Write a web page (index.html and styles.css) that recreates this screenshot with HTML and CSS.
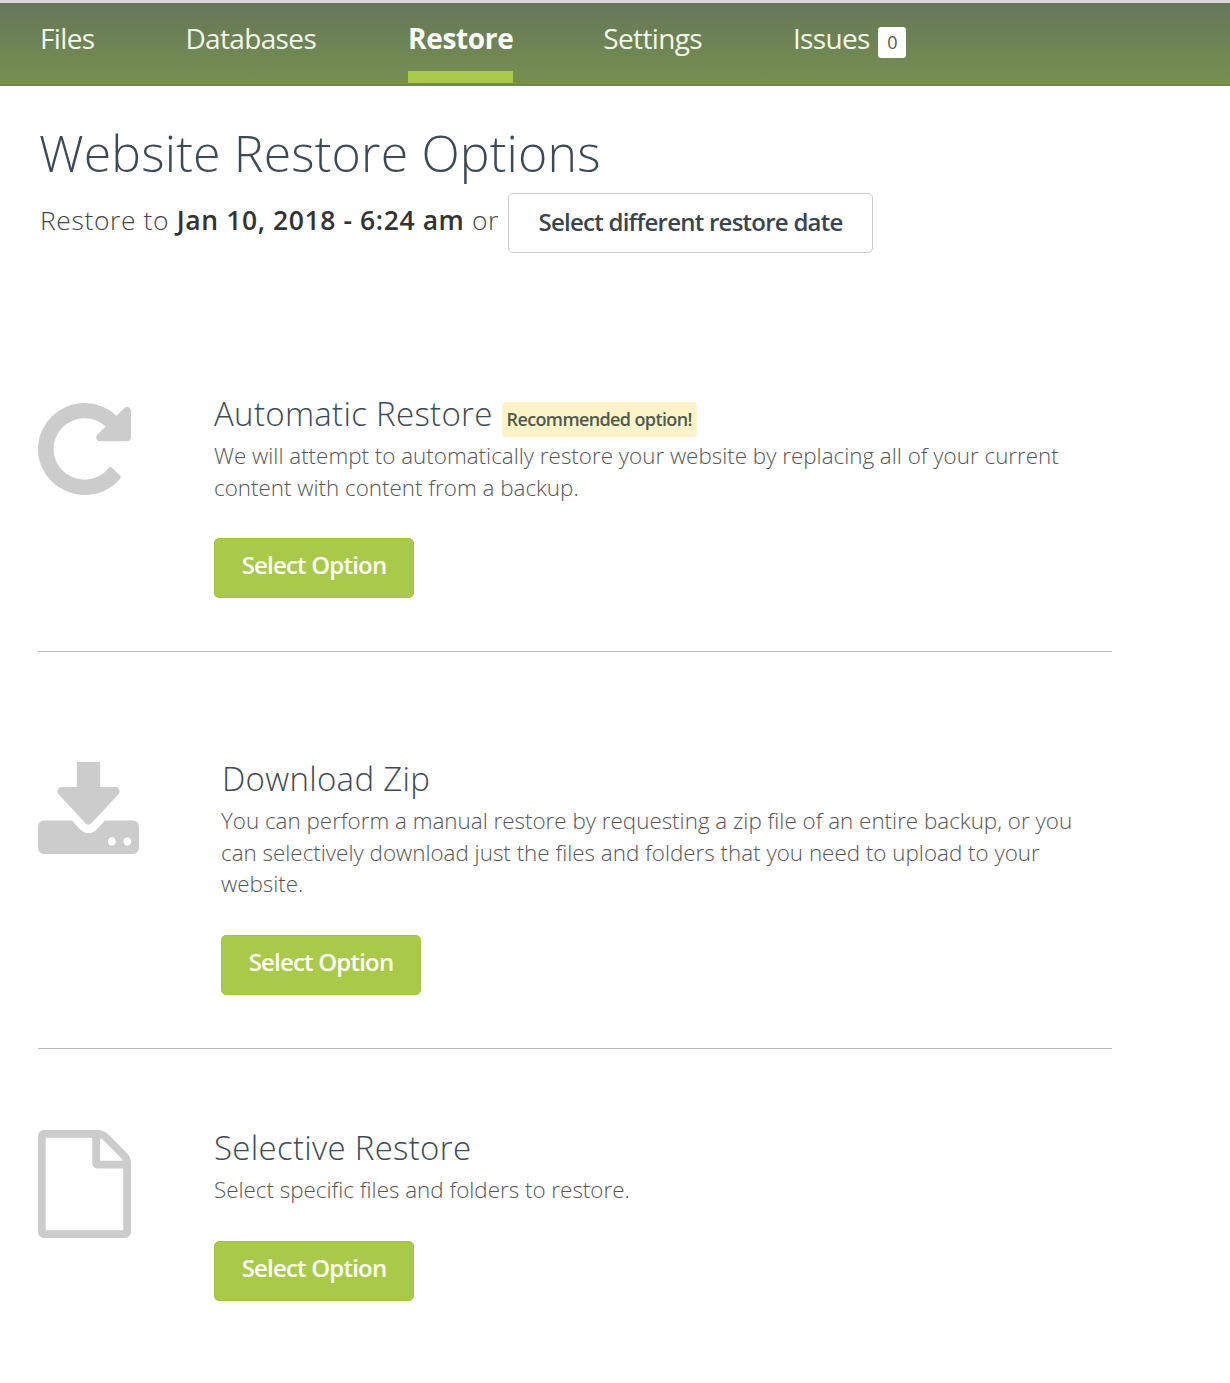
FILE: index.html
```html
<!DOCTYPE html>
<html lang="en">
<head>
<meta charset="utf-8">
<title>Website Restore Options</title>
<link rel="stylesheet" href="styles.css">
</head>
<body>
<nav class="nav">
  <a class="nav-item">Files</a>
  <a class="nav-item">Databases</a>
  <a class="nav-item active">Restore</a>
  <a class="nav-item">Settings</a>
  <a class="nav-item">Issues <span class="count">0</span></a>
</nav>
<main class="main">
  <h1 class="title">Website Restore Options</h1>
  <div class="subtitle">
    <span class="restore-to">Restore to <strong>Jan 10, 2018 - 6:24 am</strong> or</span>
    <button class="date-btn">Select different restore date</button>
  </div>

  <section class="option first">
    <svg class="icon icon-redo" viewBox="128 128 1536 1536" width="93" height="92" preserveAspectRatio="none">
      <path fill="#ccc" d="M1664 256v448q0 26-19 45t-45 19h-448q-42 0-59-40-17-39 14-69l138-138q-148-137-349-137-104 0-198.5 40.5t-163.5 109.5-109.5 163.5-40.5 198.5 40.5 198.5 109.5 163.5 163.5 109.5 198.5 40.5q119 0 225-52t179-147q7-10 23-12 15 0 25 9l137 138q9 8 9.5 20.5t-7.5 22.5q-109 132-264 204.5t-327 72.5q-156 0-298-61t-245-164-164-245-61-298 61-298 164-245 245-164 298-61q147 0 284.5 55.5t244.5 156.5l130-129q29-31 70-14 39 17 39 59z"/>
    </svg>
    <div class="body">
      <h2 class="opt-title">Automatic Restore <span class="tag">Recommended option!</span></h2>
      <p class="desc">We will attempt to automatically restore your website by replacing all of your current content with content from a backup.</p>
      <button class="select">Select Option</button>
    </div>
  </section>

  <section class="option second">
    <svg class="icon icon-dl" viewBox="64 128 1664 1408" width="101" height="92" preserveAspectRatio="none">
      <path fill="#ccc" d="M1344 1344q0-26-19-45t-45-19-45 19-19 45 19 45 45 19 45-19 19-45zm256 0q0-26-19-45t-45-19-45 19-19 45 19 45 45 19 45-19 19-45zm128-224v320q0 40-28 68t-68 28h-1472q-40 0-68-28t-28-68v-320q0-40 28-68t68-28h465l135 136q58 56 136 56t136-56l136-136h464q40 0 68 28t28 68zm-325-569q17 41-14 70l-448 448q-18 19-45 19t-45-19l-448-448q-31-29-14-70 17-39 59-39h256v-448q0-26 19-45t45-19h256q26 0 45 19t19 45v448h256q42 0 59 39z"/>
    </svg>
    <div class="body">
      <h2 class="opt-title">Download Zip</h2>
      <p class="desc">You can perform a manual restore by requesting a zip file of an entire backup, or you can selectively download just the files and folders that you need to upload to your website.</p>
      <button class="select">Select Option</button>
    </div>
  </section>

  <section class="option third">
    <svg class="icon icon-file" viewBox="128 0 1536 1792" width="93" height="108" preserveAspectRatio="none">
      <path fill="#ccc" d="M1596 380q28 28 48 76t20 88v1152q0 40-28 68t-68 28h-1344q-40 0-68-28t-28-68v-1600q0-40 28-68t68-28h896q40 0 88 20t76 48zm-444-244v376h376q-10-29-22-41l-313-313q-12-12-41-22zm384 1528v-1024h-416q-40 0-68-28t-28-68v-416h-768v1536h1280z"/>
    </svg>
    <div class="body">
      <h2 class="opt-title">Selective Restore</h2>
      <p class="desc">Select specific files and folders to restore.</p>
      <button class="select">Select Option</button>
    </div>
  </section>
</main>
</body>
</html>
```

FILE: styles.css
```css
* { box-sizing: border-box; }
html, body { margin: 0; padding: 0; }
body {
  background: #fff;
  font-family: "Open Sans", "Liberation Sans", sans-serif;
  color: #333;
  height: 1383px;
  overflow: hidden;
}
.nav {
  display: flex;
  gap: 91px;
  height: 86px;
  padding: 0 0 0 40px;
  border-top: 3px solid #d8d8d8;
  background: linear-gradient(#66775a, #76904f);
  border-bottom: 2px solid #6f8a45;
}
.nav-item {
  font-size: 28px;
  line-height: 70px;
  color: #f2f6ea;
  position: relative;
  display: block;
  height: 80px;
  letter-spacing: -0.65px;
}
.nav-item.active {
  margin: 0 -1px 0 1px;
  font-weight: 700;
  color: #fff;
  letter-spacing: -0.35px;
}
.nav-item.active::after {
  content: "";
  position: absolute;
  left: 0;
  right: 0;
  bottom: 0;
  height: 12px;
  background: #a9ca48;
}
.count {
  display: inline-block;
  margin-left: 2px;
  background: #fff;
  color: #555;
  font-size: 18px;
  line-height: 31px;
  width: 28px;
  height: 31px;
  text-align: center;
  border-radius: 3px;
  letter-spacing: 0;
  vertical-align: 0;
}
.main { padding: 0 118px 0 38px; }
.title {
  margin: 33px 0 0 1px;
  font-size: 50px;
  line-height: 68px;
  font-weight: 300;
  letter-spacing: 0.15px;
  color: #3d4a55;
}
.subtitle {
  display: flex;
  align-items: flex-start;
  gap: 9px;
  margin: 6px 0 0 2px;
  font-size: 26.5px;
  font-weight: 300;
  color: #444;
}
.restore-to { line-height: 55px; letter-spacing: 0.6px; }
.subtitle strong { font-weight: 600; color: #333; }
.date-btn {
  width: 365px;
  height: 60px;
  padding-bottom: 4px;
  background: #fff;
  border: 1px solid #ccc;
  border-radius: 5px;
  font: 600 24px "Open Sans", sans-serif;
  color: #3a444c;
  letter-spacing: -0.75px;
}
.option {
  display: flex;
  align-items: flex-start;
  gap: 83px;
}
.option + .option { border-top: 1px solid #bbb; }
.first { margin-top: 139px; padding-bottom: 53px; }
.second { padding-top: 105px; padding-bottom: 53px; }
.third { padding-top: 77px; }
.icon { flex: none; }
.icon-redo { margin-top: 11px; }
.icon-dl { margin-top: 5px; }
.icon-file { margin-top: 4px; }
.body { flex: 1; }
.opt-title {
  margin: 0;
  height: 44px;
  font-size: 33px;
  line-height: 44px;
  font-weight: 300;
  letter-spacing: 0.3px;
  color: #3d4a55;
}
.tag {
  display: inline-block;
  background: #fcf4c8;
  border-radius: 4px;
  padding: 0 5px;
  font-size: 18px;
  line-height: 35px;
  font-weight: 600;
  color: #4f5a50;
  letter-spacing: -0.62px;
  vertical-align: 0;
}
.desc {
  margin: 4px 0 0;
  font-size: 22.4px;
  line-height: 31.5px;
  font-weight: 300;
  color: #555;
}
.second .desc, .second .select { margin-left: -1px; }
.select {
  display: block;
  margin-top: 35px;
  width: 200px;
  height: 60px;
  padding-bottom: 8px;
  background: #a9ca48;
  border: 1px solid #a2c244;
  border-radius: 5px;
  color: #fff;
  font: 600 24px "Open Sans", sans-serif;
  letter-spacing: -0.8px;
}
.third .select { margin-top: 36px; }
```
